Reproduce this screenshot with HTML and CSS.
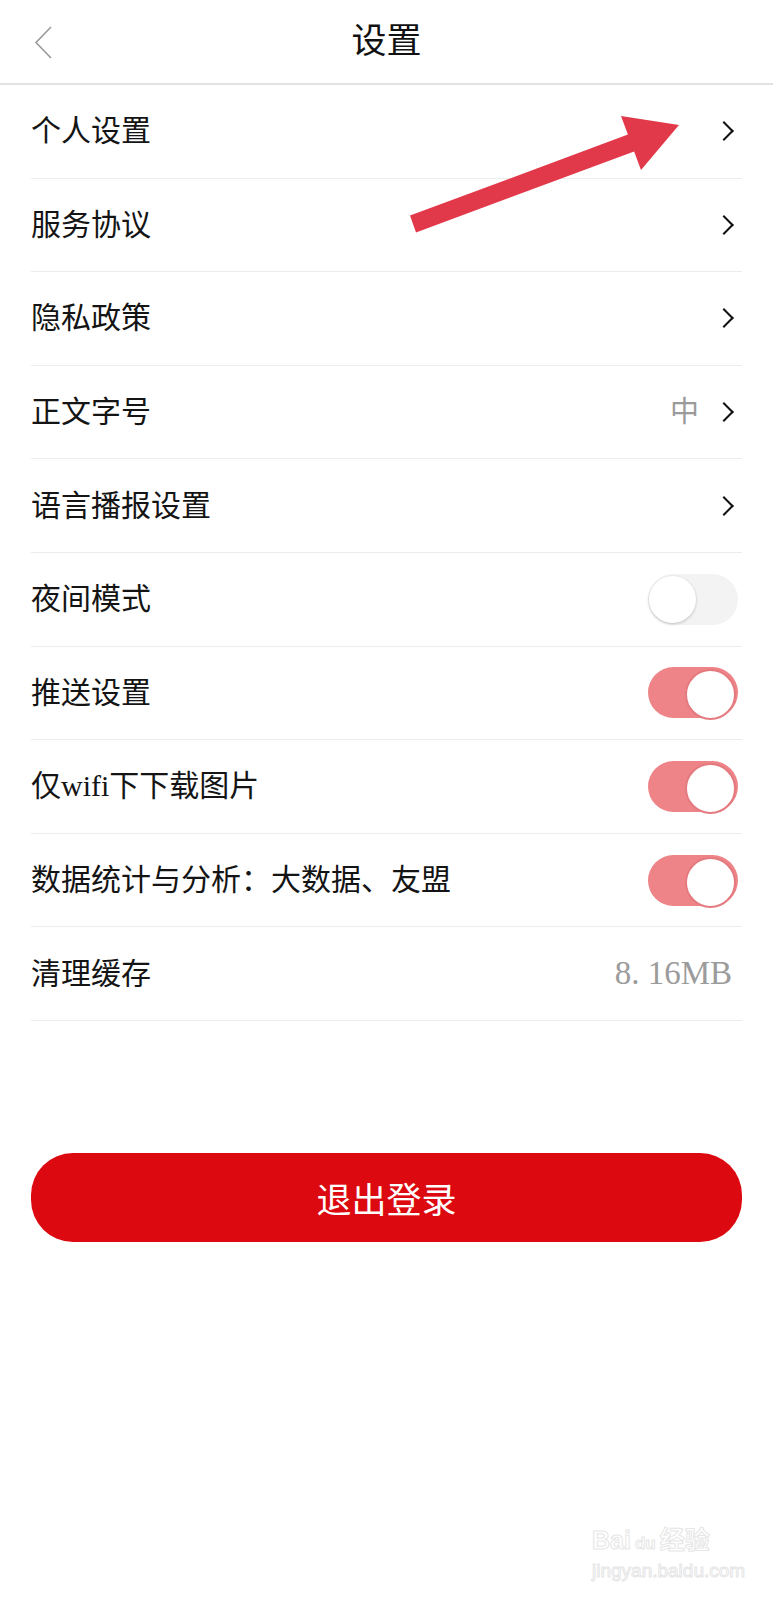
FILE: index.html
```html
<!DOCTYPE html>
<html lang="zh-CN">
<head>
<meta charset="UTF-8" />
<meta name="viewport" content="width=device-width, initial-scale=1" />
<title>设置</title>
<link rel="stylesheet" href="styles.css">
</head>
<body>

<div class="page">
  <header class="topbar">
    <a class="back" href="#" aria-label="返回">
      <svg width="20" height="34" viewBox="0 0 20 34"><polyline points="17,1 2,16.5 17,32" fill="none" stroke="#9a9a9a" stroke-width="1.6"/></svg>
    </a>
    <h1>设置</h1>
  </header>

  <ul class="settings">
    <li class="row"><span class="label">个人设置</span><span class="side"><i class="chev"></i></span></li>
    <li class="row"><span class="label">服务协议</span><span class="side"><i class="chev"></i></span></li>
    <li class="row"><span class="label">隐私政策</span><span class="side"><i class="chev"></i></span></li>
    <li class="row"><span class="label">正文字号</span><span class="side"><span class="value">中</span><i class="chev"></i></span></li>
    <li class="row"><span class="label">语言播报设置</span><span class="side"><i class="chev"></i></span></li>
    <li class="row"><span class="label">夜间模式</span><span class="side"><span class="switch"></span></span></li>
    <li class="row"><span class="label">推送设置</span><span class="side"><span class="switch on"></span></span></li>
    <li class="row"><span class="label">仅wifi下下载图片</span><span class="side"><span class="switch on"></span></span></li>
    <li class="row"><span class="label">数据统计与分析：大数据、友盟</span><span class="side"><span class="switch on"></span></span></li>
    <li class="row"><span class="label">清理缓存</span><span class="side"><span class="value cache">8. 16MB</span></span></li>
  </ul>

  <div class="logout-wrap">
    <button class="logout" type="button">退出登录</button>
  </div>

  <!-- red annotation arrow drawn over the list -->
  <svg class="arrow" width="773" height="260" viewBox="0 0 773 260">
    <polygon points="410,215.6 627.9,134.6 621,116 679,125 641,170 634.1,151.4 416,232.4" fill="#e2394a"/>
  </svg>

  <div class="watermark">
    <div class="wm-top">Bai<span class="wm-du">du</span>经验</div>
    <div class="wm-url">jingyan.baidu.com</div>
  </div>
</div>

</body>
</html>
```

FILE: styles.css
```css
* {
  box-sizing: border-box;
}
body {
  margin: 0;
  background: #fff;
  font-family: 'Liberation Serif', 'Noto Sans CJK SC', serif;
  color: #141414;
}
.page {
  position: relative;
  min-height: 1600px;
}

/* top bar */
.topbar {
  height: 85px;
  border-bottom: 2px solid #e2e2e2;
  display: flex;
  align-items: center;
  justify-content: center;
  position: relative;
}
.topbar h1 {
  margin: 0;
  font-size: 35px;
  font-weight: 400;
  color: #111;
  line-height: 1;
  margin-top: -1px;
}
.back {
  position: absolute;
  left: 34px;
  top: 26px;
  display: block;
  width: 20px;
  height: 34px;
}
.back svg {
  display: block;
}

/* list */
.settings {
  list-style: none;
  margin: 0 31px;
  padding: 0;
}
.row {
  height: 93.6px;
  border-bottom: 1.5px solid #ececec;
  display: flex;
  align-items: center;
  justify-content: space-between;
  padding-right: 4px;
}
.label {
  font-size: 30px;
  line-height: 1;
}
.side {
  display: flex;
  align-items: center;
  gap: 18px;
}
.value {
  font-size: 29px;
  color: #9b9b9b;
  line-height: 1;
}
.value.cache {
  font-size: 33px;
  margin-right: 6px;
  white-space: pre;
}
.chev {
  display: block;
  width: 14px;
  height: 14px;
  border-top: 2.6px solid #111;
  border-right: 2.6px solid #111;
  transform: rotate(45deg);
  margin-right: 7px;
}

/* switches */
.switch {
  display: block;
  width: 90px;
  height: 51px;
  border-radius: 26px;
  background: #f3f3f3;
  position: relative;
}
.switch::after {
  content: "";
  position: absolute;
  left: 1px;
  top: 2px;
  width: 47px;
  height: 47px;
  border-radius: 50%;
  background: #fff;
  box-shadow: 0 1px 3px rgba(0, 0, 0, 0.22);
}
.switch.on {
  background: #ee8488;
}
.switch.on::after {
  left: auto;
  right: 2px;
  border: 2px solid #e47a7f;
  box-shadow: none;
}

/* logout */
.logout-wrap {
  margin: 132px 31px 0;
}
.logout {
  display: block;
  width: 100%;
  height: 89px;
  border: none;
  border-radius: 42px;
  background: #dc0a10;
  color: #fff;
  font-family: 'Liberation Serif', 'Noto Sans CJK SC', serif;
  font-size: 35px;
  cursor: pointer;
}

/* overlays */
.arrow {
  position: absolute;
  left: 0;
  top: 0;
  pointer-events: none;
}
.watermark {
  position: absolute;
  left: 592px;
  top: 1528px;
  color: #fff;
  font-family: 'Liberation Sans', 'Noto Sans CJK SC', sans-serif;
  -webkit-text-stroke: 1px #e6e6e6;
  line-height: 1;
}
.wm-top {
  font-size: 25px;
  font-weight: 700;
}
.wm-du {
  font-size: 17px;
  margin: 0 4px;
}
.wm-url {
  font-size: 19px;
  margin-top: 8px;
}
```
